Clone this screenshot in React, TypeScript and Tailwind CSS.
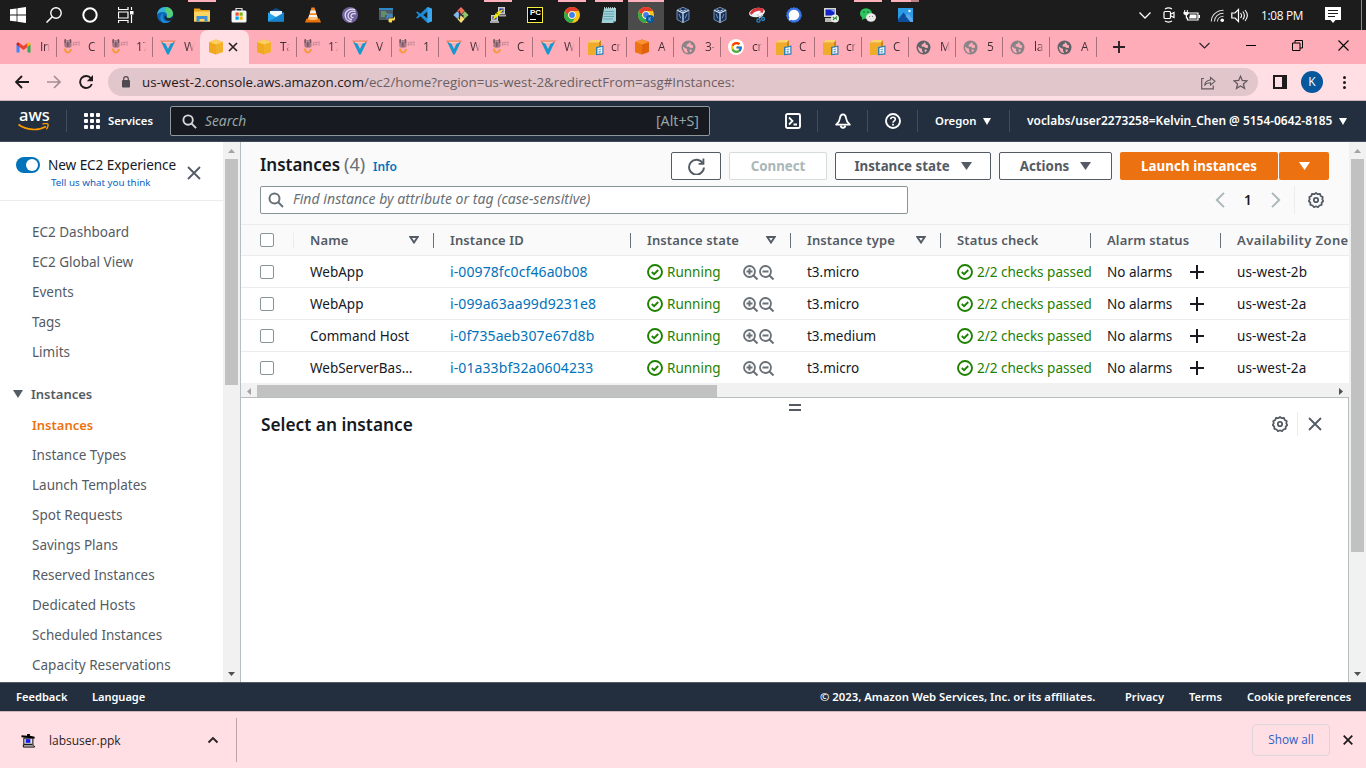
import React from "react";
import { FcGoogle } from "react-icons/fc";

type Kids = { children?: React.ReactNode };

const Svg = ({ s = 16, vb = "0 0 16 16", children, className = "" }: Kids & { s?: number; vb?: string; className?: string }) => (
  <svg width={s} height={s} viewBox={vb} fill="none" className={"shrink-0 " + className}>
    {children}
  </svg>
);

/* ---------- taskbar icons ---------- */

const WindowsIcon = () => (
  <Svg>
    <path fill="#fff" d="M0 2.300 6.600 1.400V7.600H0zM7.400 1.300 16 0v7.600H7.400zM0 8.400h6.600v6.200L0 13.700zM7.400 8.400H16V16l-8.600-1.200z" />
  </Svg>
);
const TaskSearch = () => (
  <Svg>
    <circle cx="10" cy="6" r="5.200" stroke="#fff" strokeWidth="1.400" />
    <path d="M6.300 9.700 .5 15.500" stroke="#fff" strokeWidth="1.500" />
  </Svg>
);
const Cortana = () => (
  <Svg>
    <circle cx="8" cy="8" r="6.700" stroke="#fff" strokeWidth="2" />
  </Svg>
);
const TaskView = () => (
  <Svg>
    <path d="M.5 0v2.500h9.500V0M.5 16v-2.500h9.500V16M.5 5h9.500v6H.5zM13.500 0v3M13.500 8v8" stroke="#fff" strokeWidth="1.200" />
    <rect x="12" y="4" width="3.500" height="3.500" fill="#fff" />
  </Svg>
);
const Edge = () => (
  <Svg>
    <circle cx="8" cy="8" r="8" fill="#0c62b4" />
    <path d="M.1 7.500C.6 3 4 0 8.200 0 13 0 16 3.400 16 6.800c0 2.700-2 4.200-4.200 4.200-1.900 0-2.800-.8-2.300-1.400C10.600 8 9.500 5 6 5 3 5 .8 6.400.1 7.500z" fill="#35b3d8" />
    <path d="M9 .1C13.500.5 16 3.700 16 6.800c0 2.700-2 4.200-4.200 4.200-1.900 0-2.800-.8-2.300-1.400 1.400-1.900.5-4.100-1-5z" fill="#5fd45c" opacity=".8" />
    <path d="M5.700 9.500c0 3 2.800 5.200 5.800 4.700 1.300-.2 2-.6 2.900-1.200C13 15 10.500 16 8 16c-3-.2-4.800-3-4.600-5.600C3.500 8 5 6.300 7 6.200 6.200 7 5.700 8 5.700 9.500z" fill="#1b8ad2" />
    <path d="M9.300 8.600c.8 1.700-.3 1.500.8 2.200 1.500.7 4 .3 5.300-1.600L14.500 13c-3 2-7 .3-7-2.500 0-1.200.8-2 1.800-1.900z" fill="#1c1c1c" opacity=".85" />
  </Svg>
);
const Folder = () => (
  <Svg>
    <path d="M0 1.500h5.500L7 3h9v11.500H0z" fill="#e9a31d" />
    <path d="M0 4.500h16v10H0z" fill="#fcd462" />
    <path d="M2.500 14.500V9h11v5.500h-3V12h-5v2.500z" fill="#3f8fd6" />
  </Svg>
);
const Store = () => (
  <Svg>
    <path d="M5 4V1.500h6V4" stroke="#dcdcdc" strokeWidth="1.200" />
    <rect x=".5" y="3.500" width="15" height="12" rx="1.500" fill="#f6f6f6" />
    <path d="M4.500 5.500h3.200v3.200H4.500z" fill="#f04f23" />
    <path d="M8.500 5.500h3.200v3.200H8.500z" fill="#7eb900" />
    <path d="M4.500 9.500h3.200v3.200H4.500z" fill="#00a2ee" />
    <path d="M8.500 9.500h3.200v3.200H8.500z" fill="#fdb900" />
  </Svg>
);
const Mail = () => (
  <Svg>
    <path d="M0 5.500 8 1l8 4.500V14H0z" fill="#0c4f92" />
    <path d="M2 4h12v7H2z" fill="#f2f7fb" />
    <path d="M0 5.500 8 10l8-4.500V14.500H0z" fill="#28a4ea" />
    <path d="M0 14.500 16 6v8.500z" fill="#1683cf" />
  </Svg>
);
const Vlc = () => (
  <Svg>
    <path d="M6.500.5h3L13 12H3z" fill="#f5871f" />
    <path d="M5.600 3.600h4.800l.8 2.600H4.800zM4.200 8.100h7.600l.8 2.500H3.400z" fill="#f4f1ee" />
    <path d="M1.500 11.500h13l1.500 4H0z" fill="#e8730c" />
    <path d="M3.500 10.500h9l.3 1.500c-2 1.300-7.600 1.300-9.600 0z" fill="#ffc07a" />
  </Svg>
);
const Swirl = () => (
  <Svg>
    <circle cx="8" cy="8" r="8" fill="#6f629c" />
    <path d="M13 2.500C8 1 3 4 3.200 8.500 3.400 12 6 14.500 9.500 14.500M13.500 4.500C9.500 3.500 6 5.500 6 8.500c0 2.500 2 4 4 4M14 7c-2.500-1-5 0-5 1.800 0 1.200 1 1.900 2.500 1.700" stroke="#e4dff2" strokeWidth="1.300" />
  </Svg>
);
const PyTerm = () => (
  <Svg>
    <rect x="0" y="1" width="14" height="12" fill="#4c5b66" />
    <rect x="0" y="1" width="14" height="2" fill="#2d88c8" />
    <path d="M2 5h5M2 7h7M2 9h4" stroke="#7ed06a" strokeWidth=".9" />
    <path d="M8 9c0-2 1-2.500 3-2.500s2.500 1 2.500 2v2H10c-1 0-1.500.8-1.500 2-1.500 0-1.500-3.500-.5-3.500z" fill="#3f86c0" />
    <path d="M15 9.500c1.500 0 1.200 4 0 4h-2v1.500c0 .8-3.500.8-3.500-.8v-1.400c0-1 .8-1.400 1.500-1.400h3c.7 0 1-.7 1-1.900z" fill="#ffd94a" />
  </Svg>
);
const VsCode = () => (
  <Svg>
    <path d="M11.500 0 16 1.800v12.400L11.500 16 4.300 9.300 1.500 11.500 0 10.700 2.600 8 0 5.300l1.500-.8 2.800 2.200zM11.500 4.500 7.200 8l4.300 3.500z" fill="#1c8cd8" fillRule="evenodd" />
    <path d="M11.500 0 16 1.800v12.400L11.500 16z" fill="#3aa6ee" />
  </Svg>
);
const GitBash = () => (
  <Svg>
    <path d="m8 0 3.700 3.700L8 7.400 4.300 3.700z" fill="#f0705a" />
    <path d="m4.300 4.300 3.500 3.700-3.500 3.700L.3 8z" fill="#86b7ee" />
    <path d="m11.700 4.300 3.900 3.700-3.900 3.700L8.200 8z" fill="#8fc86a" />
    <path d="M8 8.600 11.700 12 8 16l-3.700-4z" fill="#f5dc7a" />
    <path d="M6.500 3.500v9M6.500 6l3.500 3M10 8v2" stroke="#3a2f2f" strokeWidth="1.200" />
  </Svg>
);
const Putty = () => (
  <Svg>
    <path d="M8 0h7v7H8zM1 8h7v6H1z" fill="#c8c8c8" />
    <path d="M9.500 1.500h4v4h-4zM2.500 9.500h4v3h-4z" fill="#1e2ea8" />
    <path d="M9 7.500h7v2H9zM0 14h9v2H0z" fill="#a5a5a5" />
    <path d="m12.500 3-5 2.500L9.500 7 3.500 12l2.500-5 2 .5z" fill="#fff230" stroke="#f2e400" strokeWidth="1.200" />
  </Svg>
);
const PyCharm = () => (
  <span className="flex h-4 w-4 flex-col items-start border border-[#f4f03c] bg-black pl-0.5 font-['Liberation_Sans'] text-[8px] leading-[9px] font-bold text-white">
    PC
    <span className="mt-0.5 h-px w-1.5 bg-white" />
  </span>
);
const Chrome = ({ badge = false }: { badge?: boolean }) => (
  <Svg>
    <circle cx="8" cy="8" r="8" fill="#fbc116" />
    <path d="M1.100 4A8 8 0 0 1 14.900 4H8a4 4 0 0 0-3.500 6z" fill="#e33b2e" />
    <path d="M1.100 4A8 8 0 0 0 7.800 16l3.600-6a4 4 0 0 1-6.900 0z" fill="#2da94f" />
    <circle cx="8" cy="8" r="3.700" fill="#fff" />
    <circle cx="8" cy="8" r="2.900" fill="#3f7fe8" />
    {badge && <circle cx="12" cy="12" r="4" fill="#07579d" />}
    {badge && <path d="M11 10.300v3.400m2-3.400L11.200 12l1.900 1.700" stroke="#8fc1ee" strokeWidth=".8" />}
  </Svg>
);
const Notepad = () => (
  <Svg>
    <path d="M3 1.500 15 1v13l-3 2H.5z" fill="#9fd2d8" />
    <path d="M12 16V14l3 0z" fill="#5d8f97" />
    <path d="M3.500 4.500h9.500M3 7h10M2.700 9.500H13M2.300 12H12" stroke="#5b9aa4" strokeWidth=".8" />
    <path d="M3 1h12" stroke="#d5e6e8" strokeWidth="1.500" strokeDasharray="1 1" />
  </Svg>
);
const VBox = () => (
  <Svg>
    <path d="M8 .3 14 3v9.500L8 15.700 2 12.500V3z" fill="#14315c" stroke="#9fb6d4" strokeWidth=".7" />
    <path d="M2.300 3.200 8 6l5.700-2.800M8 6v9.500" stroke="#dce8f6" strokeWidth="1.200" />
    <path d="M5 2.800 8 4.300l3-1.500" stroke="#dce8f6" strokeWidth=".9" />
    <path d="m4 6.800 1.800 4.500M12 6.800l-1.800 4.500" stroke="#7f9bc2" strokeWidth=".9" />
  </Svg>
);
const Snip = () => (
  <Svg>
    <ellipse cx="8" cy="5.500" rx="8" ry="4.500" fill="#eceef0" transform="rotate(-12 8 5.500)" />
    <path d="M1 6c2-5 9-6.500 14-4l-1.500 4C10 4 5 5 2 8z" fill="#d8343c" />
    <path d="M4 6.500c2-2 5-3 8-2.500l-3 3z" fill="#fff" />
    <path d="m8 7 3 4m3-3-4 3" stroke="#c2d5e5" strokeWidth="1.200" />
    <circle cx="9.500" cy="13.500" r="1.600" stroke="#2b86c8" strokeWidth="1.300" />
    <circle cx="14" cy="12" r="1.500" stroke="#2b86c8" strokeWidth="1.300" />
  </Svg>
);
const Signal = () => (
  <Svg>
    <circle cx="8" cy="8" r="7.300" fill="#3a76ea" stroke="#3a76ea" strokeDasharray="2 1" />
    <path d="M8 2.700a5.300 5.300 0 1 1-2.500 10L2.700 13.500l.8-2.800A5.300 5.300 0 0 1 8 2.700z" fill="#fff" />
  </Svg>
);
const Rdp = () => (
  <Svg>
    <path d="M1 1h12v9H1z" fill="#d6d7cf" />
    <path d="M2.500 2.500h9v6h-9z" fill="#1324c8" />
    <path d="M7 2.500h4.500v3z" fill="#8f9cf0" />
    <path d="M2 11h8v4H2z" fill="#b9bab2" />
    <circle cx="12" cy="11.500" r="4" fill="#e9eee9" />
    <path d="m10 10 1.500 1.500L10 13m4-3.500L12.500 11l1.500 1.500" stroke="#2a8a30" strokeWidth="1.100" />
  </Svg>
);
const WeChat = () => (
  <Svg>
    <ellipse cx="6" cy="6.500" rx="6" ry="5.200" fill="#2dc55e" />
    <path d="m2.500 10-.7 3 3-1.500z" fill="#2dc55e" />
    <circle cx="4" cy="5" r=".8" fill="#155c2c" />
    <circle cx="8" cy="5" r=".8" fill="#155c2c" />
    <ellipse cx="11" cy="10.500" rx="5" ry="4.200" fill="#e9e9e9" />
    <circle cx="9.500" cy="9.500" r=".6" fill="#777" />
    <circle cx="12.500" cy="9.500" r=".6" fill="#777" />
  </Svg>
);
const Photos = () => (
  <Svg>
    <rect x="1" y="1" width="15" height="14" fill="#2b9be6" />
    <path d="M1 12.500 6.500 5.500 14 15H1z" fill="#0d4f9b" />
    <path d="m8.500 9 2.500-2.500 5 6V15h-2.500z" fill="#5aa9ea" />
    <circle cx="12.500" cy="4" r="1.200" fill="#fff" />
  </Svg>
);

const taskApps: { icon: React.ReactNode; open?: boolean; active?: boolean; stacked?: boolean }[] = [
  { icon: <Edge /> },
  { icon: <Folder />, open: true },
  { icon: <Store /> },
  { icon: <Mail /> },
  { icon: <Vlc /> },
  { icon: <Swirl /> },
  { icon: <PyTerm /> },
  { icon: <VsCode /> },
  { icon: <GitBash /> },
  { icon: <Putty />, open: true },
  { icon: <PyCharm /> },
  { icon: <Chrome />, open: true },
  { icon: <Notepad />, open: true },
  { icon: <Chrome badge />, active: true },
  { icon: <VBox /> },
  { icon: <VBox /> },
  { icon: <Snip /> },
  { icon: <Signal /> },
  { icon: <Rdp /> },
  { icon: <WeChat />, open: true },
  { icon: <Photos />, stacked: true },
];

function Taskbar() {
  return (
    <div className="flex h-[30px] shrink-0 bg-[#1c1c1c] text-white">
      {[<WindowsIcon />, <TaskSearch />, <Cortana />, <TaskView />].map((icon, i) => (
        <div key={i} className="flex w-9 items-center justify-center">{icon}</div>
      ))}
      <div className="ml-[3px] flex gap-px">
        {taskApps.map((a, i) => (
          <div key={i} className={"flex w-9 flex-col items-center " + (a.active ? "bg-[#4b4b4b]" : "")}>
            {a.stacked ? (
              <span className="flex h-0.5 w-7"><span className="w-5 bg-[#ffb0bb]" /><span className="w-2 bg-[#b98289]" /></span>
            ) : (
              <span className={"h-0.5 " + (a.active ? "w-9 bg-[#ffb0bb]" : a.open ? "w-7 bg-[#ffb0bb]" : "w-7")} />
            )}
            <span className="mt-[5px]">{a.icon}</span>
          </div>
        ))}
      </div>
      <div className="ml-auto flex items-center">
        <Svg s={12} vb="0 0 12 12"><path d="M.5 3.500 6 9l5.500-5.500" stroke="#fff" strokeWidth="1.300" /></Svg>
        <Svg s={16} className="ml-[10px]">
          <rect x="3" y="4.500" width="6.500" height="7" rx="1" stroke="#fff" strokeWidth="1.200" />
          <path d="m10 7 3-1.500v5L10 9M4 2c2-1.200 5-1.200 7 0M4 14c2 1.200 5 1.200 7 0" stroke="#fff" strokeWidth="1.200" />
        </Svg>
        <Svg s={17} vb="0 0 17 16" className="ml-[6px]">
          <path d="M5 5.500h10v7H4.500V10" stroke="#fff" strokeWidth="1.200" />
          <path d="M7 7h6.500v4H6zM15.500 7.500h1.500v3h-1.500zM.5 4.500h5v2L4 8v3H2.800V8L.5 6.500z" fill="#fff" />
          <path d="M1.700 2.500v3M4.300 2.500v3" stroke="#fff" />
        </Svg>
        <Svg s={14} className="ml-[10px]">
          <path d="M1.500 15.500C1.500 8 8 2.500 15.500 2.500M5 15.500C5 10 9.500 6 15.500 6M8.500 15.500c0-3.500 3-6 7-6" stroke="#d8d8d8" strokeWidth="1.200" />
          <circle cx="14" cy="14" r="2" fill="#fff" />
        </Svg>
        <Svg s={17} vb="0 0 17 16" className="ml-[7px]">
          <path d="M.8 5.500H4l3.500-3.500v12L4 10.500H.8z" stroke="#fff" strokeWidth="1.200" />
          <path d="M9.500 5.500c1.300 1.500 1.300 3.500 0 5M11.800 4c2 2.500 2 5.500 0 8M14 2.500c3 3.500 3 7.500 0 11" stroke="#fff" strokeWidth="1.100" />
        </Svg>
        <span className="ml-[13px] w-[42px] font-['Open_Sans'] text-[11.800px] leading-4 tracking-[-0.3px] whitespace-nowrap">1:08 PM</span>
        <Svg s={16} className="ml-[22px]">
          <path d="M0 0h16v13h-5.500L8 16l-2.500-3H0z" fill="#fff" />
          <path d="M3 3.500h10M3 6.500h10M3 9.500h7" stroke="#1c1c1c" strokeWidth="1.100" />
        </Svg>
        <span className="ml-[20px] h-[30px] w-px bg-[#8a8a8a]" />
        <span className="w-1" />
      </div>
    </div>
  );
}

/* ---------- browser tabs ---------- */

const Gmail = () => (
  <Svg s={15} vb="0 0 15 15">
    <path d="M.5 4v8.500h3V6.500z" fill="#4285f4" />
    <path d="M14.500 4v8.500h-3V6.500z" fill="#34a853" />
    <path d="M3.500 3v4l4 3 4-3V3l-4 3z" fill="#ea4335" />
    <path d="M.5 4c0-1.800 1.800-2 3-1v4l-3-2.500z" fill="#c5221f" />
    <path d="M14.500 4c0-1.800-1.800-2-3-1v4l3-2.500z" fill="#fbbc04" />
  </Svg>
);
const Vocareum = () => (
  <Svg s={16} vb="0 0 16 16">
    <path d="M0 1.500h16l-2.500 3H2.700z" fill="#f07f5c" />
    <path d="M2.500 2.800h11l-1.500 1.700H4z" fill="#fbc9c6" />
    <path d="M1.200 3 5.500 4.800 8 10l2.500-5.200L14.800 3 8.800 15.500H7.200z" fill="#1698cf" />
  </Svg>
);
const AwsFaint = () => (
  <Svg s={16} vb="0 0 16 16">
    <path d="M.3 1h7.200v6.500c-1 1.800-6 1.800-7.200 0z" fill="#a67884" />
    <path d="M1.200 0v4M6.400 0v4M3.800 3.500v4" stroke="#6f5360" strokeWidth="1.300" />
    <path d="M2.500 1.500v1.500M5 1.500v1.500" stroke="#d599a5" strokeWidth="1" />
    <path d="M8.500 3.500h7M8.500 5.500h5M9.500 3v4M12 2.500v4M15 2v5" stroke="#c58a97" strokeWidth="1.100" opacity=".8" />
    <path d="M1 9.500c-.3 5 5.800 5.200 6 .5" stroke="#f7983c" strokeWidth="2" />
  </Svg>
);
const Cube = ({ a = "#f3b02a", b = "#f0a81f", c = "#fbd05f" }: { a?: string; b?: string; c?: string }) => (
  <Svg s={16}>
    <path d="M8 .5 15 3v10l-7 2.500L1 13V3z" fill={a} />
    <path d="M1 3l7 2.500V15.500L1 13z" fill={b} />
    <path d="M8 .5 15 3 8 5.500 1 3z" fill={c} />
  </Svg>
);
const CubeDoc = () => (
  <Svg s={17} vb="0 0 17 16">
    <path d="m1 3 3-2.500h10L12 3z" fill="#fbd36b" />
    <path d="M1 3h11v12.500H1z" fill="#f0ab28" />
    <path d="m12 3 2-2.500v13L12 15.500z" fill="#c98512" />
    <path d="m9 7.500 7.500-1.500v9L9 15.800z" fill="#2e7eb5" />
    <path d="m10.500 8.500 4.800-.9v6.200l-4.800.8z" fill="#fff" />
    <path d="m11.500 10 2.800-.4M11.500 12l2.800-.4M11.500 13.500l2-.3" stroke="#2e7eb5" strokeWidth=".8" />
  </Svg>
);
const Globe = ({ dark = false }: { dark?: boolean }) => (
  <Svg s={15} vb="0 0 15 15">
    <circle cx="7.500" cy="7.500" r="7" fill={dark ? "#5f6368" : "#8a8387"} />
    <path d="M9 2.200c-1 .2-1.500.8-1.300 1.600L5.800 4.500 5.500 6.500l2.500.3 1.500 1.200 2.500-.2V5.500L10 4.500zM2 6.500l2.300 1.700 1.700.6v2l1.300 1.900H5C3 11.500 1.800 9 2 6.500zM8.500 9.500l2.500.3-.8 1.700-1.200.8z" fill="#ffacb9" />
  </Svg>
);
const GoogleTab = () => (
  <span className="flex h-4 w-4 shrink-0 items-center justify-center rounded-full bg-white"><FcGoogle size={13} /></span>
);

const LT = <Globe />;
const DK = <Globe dark />;
const left: [React.ReactNode, string][] = [[<Gmail />, "In"], [<AwsFaint />, "C"], [<AwsFaint />, "17"], [<Vocareum />, "W"]];
const right: [React.ReactNode, string][] = [
  [<Cube />, "Ta"], [<AwsFaint />, "17"], [<Vocareum />, "V"], [<AwsFaint />, "1"], [<Vocareum />, "W"], [<AwsFaint />, "C"],
  [<Vocareum />, "W"], [<CubeDoc />, "cr"], [<Cube a="#e0620a" b="#ee7412" c="#fb9332" />, "A"], [LT, "3-"], [<GoogleTab />, "cr"],
  [<CubeDoc />, "C"], [<CubeDoc />, "cr"], [<CubeDoc />, "C"], [DK, "M"], [LT, "5"], [LT, "la"], [DK, "A"],
];

const Tab = ({ icon, text, wide, line = true }: { icon: React.ReactNode; text: string; wide?: boolean; line?: boolean }) => (
  <div className={"flex h-full items-center overflow-hidden pl-[7px] " + (wide ? "w-12" : "w-[47px]")}>
    <span className="flex w-6 shrink-0">{icon}</span>
    <span className="w-[10px] overflow-hidden bg-linear-to-r from-[#3c2b30] from-50% to-[#ffacb9] bg-clip-text text-[12px] tracking-[-0.300px] whitespace-nowrap text-transparent">{text}</span>
    <span className={"ml-auto h-5 w-px shrink-0 " + (line ? "bg-[#a8707b]" : "")} />
  </div>
);

function TabStrip() {
  return (
    <div className="flex h-[34px] shrink-0 items-center bg-[#ffacb9] pl-[9px] font-['Open_Sans']">
      {left.map(([icon, t], i) => <Tab key={i} icon={icon} text={t} wide={i < 3} line={i < 3} />)}
      <div className="flex h-full w-[49px] items-center rounded-t-lg bg-[#ffdee4] pl-2">
        <Cube />
        <Svg s={10} vb="0 0 10 10" className="ml-1"><path d="m1 1 8 8M9 1 1 9" stroke="#2b2226" strokeWidth="1.700" /></Svg>
      </div>
      {right.map(([icon, t], i) => <Tab key={i} icon={icon} text={t} wide={i < 2} />)}
      <Svg s={12} vb="0 0 12 12" className="ml-4"><path d="M6 0v12M0 6h12" stroke="#2b2226" strokeWidth="1.900" /></Svg>
      <div className="ml-auto flex items-center pb-1">
        <Svg s={11} vb="0 0 11 11"><path d="m.5 3 5 5 5-5" stroke="#2b2226" strokeWidth="1.100" /></Svg>
        <span className="ml-9 h-px w-2.5 bg-black" />
        <Svg s={11} vb="0 0 11 11" className="ml-9"><path d="M.5 3h7.500v7.500H.5zM3 3V.5h7.500V8H8" stroke="#000" /></Svg>
        <Svg s={11} vb="0 0 11 11" className="mr-[17px] ml-[35px]"><path d="m.5.5 10 10m0-10-10 10" stroke="#000" strokeWidth="1.100" /></Svg>
      </div>
    </div>
  );
}

function AddressBar() {
  return (
    <div className="flex h-[37px] shrink-0 items-start border-b border-[#cdb5ba] bg-[#ffdee4] pt-1">
      <div className="flex h-7 w-[108px] items-center pl-[15px]">
        <Svg s={14} vb="0 0 14 14"><path d="M14 7H1m6-6L1 7l6 6" stroke="#1f1a1c" strokeWidth="1.900" /></Svg>
        <Svg s={14} vb="0 0 14 14" className="ml-[18px]"><path d="M0 7h13M7 1l6 6-6 6" stroke="#a38f94" strokeWidth="1.700" /></Svg>
        <Svg s={14} vb="0 0 14 14" className="ml-[18px]">
          <path d="M12 3.500A6 6 0 1 0 12.800 9" stroke="#1f1a1c" strokeWidth="1.900" />
          <path d="M14 0v6.200H7.800z" fill="#1f1a1c" />
        </Svg>
      </div>
      <div className="flex h-7 w-[1150px] items-center rounded-full bg-[#e1c6cb] pr-[10px] pl-[14px]">
        <svg width="8" height="12" viewBox="0 0 8 12" fill="none" className="shrink-0">
          <rect x="0" y="4" width="8" height="7.500" rx="1" fill="#4f4a50" />
          <path d="M1.700 5V3a2.300 2.300 0 0 1 4.600 0v2" stroke="#4f4a50" strokeWidth="1.200" />
        </svg>
        <span className="ml-3 pt-0.5 font-['Open_Sans'] text-[13.300px] tracking-[0.020px] whitespace-nowrap text-[#6b5f63]">
          <span className="text-[#1f1a1c]">us-west-2.console.aws.amazon.com</span>/ec2/home?region=us-west-2&amp;redirectFrom=asg#Instances:
        </span>
        <Svg s={15} vb="0 0 15 14" className="ml-auto">
          <path d="M3 3H.7v10.300h11.600V10" stroke="#655b5f" strokeWidth="1.200" />
          <path d="M3.500 10C4 6.500 6 4.700 9.500 4.500V2L14 5.800 9.500 9.500V7.300C7 7.300 5 8 3.500 10z" stroke="#655b5f" strokeWidth="1.100" />
        </Svg>
        <Svg s={15} vb="0 0 15 15" className="ml-[17px]">
          <path d="m7.500 1.300 1.800 4.200 4.600.4-3.500 3 1.100 4.500-4-2.400-4 2.400 1.100-4.500-3.500-3 4.600-.4z" stroke="#655b5f" strokeWidth="1.300" />
        </Svg>
      </div>
      <div className="flex h-7 items-center pl-[15px]">
        <Svg s={14} vb="0 0 14 14"><path d="M1 1h12v12H1z" stroke="#1f1a1c" strokeWidth="2" /><path d="M9 1h4v12H9z" fill="#1f1a1c" /></Svg>
        <span className="ml-[14px] flex h-[22px] w-[22px] items-center justify-center rounded-full bg-[#07579d] font-['Open_Sans'] text-[12px] text-white">K</span>
        <span className="ml-5 flex flex-col gap-0.5">
          {[0, 1, 2].map((i) => <span key={i} className="h-[3px] w-[3px] rounded-full bg-[#1f1a1c]" />)}
        </span>
      </div>
    </div>
  );
}

/* ---------- console ---------- */

const Tri = ({ w = 10, h = 8, color = "#545b64" }: { w?: number; h?: number; color?: string }) => (
  <svg width={w} height={h} viewBox="0 0 10 8" preserveAspectRatio="none" className="shrink-0"><path d="M0 0h10L5 8z" fill={color} /></svg>
);

const Magnifier = ({ color, s = 16 }: { color: string; s?: number }) => (
  <Svg s={s}><circle cx="6.500" cy="6.500" r="5" stroke={color} strokeWidth="2" /><path d="m10 10 5 5" stroke={color} strokeWidth="2" /></Svg>
);

const Divider = () => <span className="mr-[17px] ml-4 block h-[22px] w-px bg-[#414d5c]" />;

function ConsoleHeader() {
  return (
    <div className="flex h-[41px] shrink-0 items-center border-b border-[#414d5c] bg-[#232f3e] text-[11.300px] font-semibold text-white">
      <div className="ml-[18px] flex w-[31px] flex-col">
        <span className="-mt-1 h-[15px] pl-px text-[16.500px] leading-[14px] font-medium">aws</span>
        <svg width="31" height="8" viewBox="0 0 31 8" fill="none"><path d="M.5 1.500c8 6 20 6.500 27.500 2" stroke="#f90" strokeWidth="1.700" /><path d="M24.500 1.200c2-.8 4.500-1 5.300-.2s0 3.500-1.500 5.300" stroke="#f90" strokeWidth="1.300" /></svg>
      </div>
      <span className="mx-[17px] block h-[22px] w-px bg-[#414d5c]" />
      <span className="grid grid-cols-3 gap-[2px]">
        {Array.from({ length: 9 }, (_, i) => <span key={i} className="h-1 w-1 rounded-[1px] bg-white" />)}
      </span>
      <span className="ml-2 w-[62px]">Services</span>
      <div className="flex h-[30px] w-[540px] items-center rounded-[2px] border border-[#8d9999] bg-[#171a21] pr-[10px] pl-[11px] font-normal text-[#95a5a6]">
        <Magnifier color="#d5dbdb" s={15} />
        <span className="ml-2 text-[13.800px] italic">Search</span>
        <span className="ml-auto text-[14.200px]">[Alt+S]</span>
      </div>
      <Svg className="ml-[75px]"><rect x="1" y="1" width="14" height="14" rx="1.500" stroke="#fff" strokeWidth="1.900" /><path d="m4 4.500 3.500 3.500L4 11.500M8.500 11.500H12" stroke="#fff" strokeWidth="1.800" /></Svg>
      <Divider />
      <Svg><path d="M8 1.300C6 1.300 5.200 3 5 5 4.800 8 3.500 9.500 1.200 11.700h13.600C12.500 9.500 11.200 8 11 5c-.2-2-1-3.700-3-3.700z" stroke="#fff" strokeWidth="1.800" strokeLinejoin="round" /><path d="M5.800 12.500a2.200 2.200 0 0 0 4.400 0" stroke="#fff" strokeWidth="1.900" /></Svg>
      <Divider />
      <Svg><circle cx="8" cy="8" r="7" stroke="#fff" strokeWidth="1.900" /><path d="M5.700 6.200C5.700 4.800 6.800 4.200 8 4.200s2.300.8 2.300 2C10.300 7.800 8 7.800 8 9.700" stroke="#fff" strokeWidth="1.600" /><rect x="7.100" y="10.800" width="1.800" height="1.700" fill="#fff" /></Svg>
      <Divider />
      <span className="w-[48px]">Oregon</span>
      <Tri w={8} h={7} color="#fff" />
      <span className="mr-[17px] ml-[18px] block h-[22px] w-px bg-[#414d5c]" />
      <span className="w-[312px] text-[11.900px] tracking-[0.020px] whitespace-nowrap">voclabs/user2273258=Kelvin_Chen @ 5154-0642-8185</span>
      <Tri w={8} h={7} color="#fff" />
    </div>
  );
}

const Cross = ({ s = 14, color = "#545b64", sw = 2 }: { s?: number; color?: string; sw?: number }) => (
  <Svg s={s} vb="0 0 14 14"><path d="m1 1 12 12M13 1 1 13" stroke={color} strokeWidth={sw} /></Svg>
);

const VScroll = ({ thumb }: { thumb: string }) => (
  <div className="flex w-[17px] shrink-0 flex-col items-center bg-[#f1f1f1]">
    <span className="flex h-[17px] items-center"><svg width="7" height="4" viewBox="0 0 7 4"><path d="M0 4h7L3.500 0z" fill="#a3a3a3" /></svg></span>
    <span className={"w-[13px] bg-[#c1c1c1] " + thumb} />
    <span className="mt-auto flex h-[17px] items-center"><svg width="7" height="4" viewBox="0 0 7 4"><path d="M0 0h7L3.500 4z" fill="#505050" /></svg></span>
  </div>
);

const topNav = ["EC2 Dashboard", "EC2 Global View", "Events", "Tags", "Limits"];
const instNav = ["Instances", "Instance Types", "Launch Templates", "Spot Requests", "Savings Plans", "Reserved Instances", "Dedicated Hosts", "Scheduled Instances", "Capacity Reservations"];

function Sidebar() {
  return (
    <>
      <nav className="flex w-[223px] shrink-0 flex-col overflow-hidden bg-white text-[13.500px] text-[#545b64]">
        <div className="flex h-[59px] shrink-0 items-start border-b border-[#eaeded] pl-4">
          <span className="mt-[15px] flex h-4 w-6 justify-end rounded-full bg-[#0073bb] p-0.5"><span className="h-3 w-3 rounded-full bg-white" /></span>
          <div className="ml-2 flex w-[139px] flex-col whitespace-nowrap">
            <span className="mt-[13px] text-[13.600px] leading-5 tracking-[-0.080px] text-[#16191f]">New EC2 Experience</span>
            <span className="ml-[3px] text-[9.800px] leading-[15px] text-[#0a5fc0]">Tell us what you think</span>
          </div>
          <span className="mt-6"><Cross s={14} sw={1.800} /></span>
        </div>
        <ul className="mt-4 pl-8">
          {topNav.map((t) => <li key={t} className="h-[30px] leading-[30px]">{t}</li>)}
        </ul>
        <div className="mt-3 flex h-[30px] items-center pl-[13px] font-semibold">
          <Tri w={10} h={8} />
          <span className="ml-2 pb-px text-[13px] leading-5">Instances</span>
        </div>
        <ul className="mt-px pl-8">
          {instNav.map((t, i) => <li key={t} className={"h-[30px] leading-[30px] whitespace-nowrap " + (i === 0 ? "text-[13px] font-semibold text-[#ec7211]" : "")}>{t}</li>)}
        </ul>
      </nav>
      <VScroll thumb="h-[226px]" />
    </>
  );
}

const Check = () => (
  <Svg><circle cx="8" cy="8" r="7" stroke="#1d8102" strokeWidth="1.900" /><path d="m4.800 8 2.300 2.200 4.100-4.200" stroke="#1d8102" strokeWidth="1.900" /></Svg>
);
const Zoom = ({ plus = false }: { plus?: boolean }) => (
  <Svg s={15} vb="0 0 15 15">
    <circle cx="6.500" cy="6.500" r="5.500" stroke="#687078" strokeWidth="1.800" />
    <path d={plus ? "M3.500 6.500h6M6.500 3.500v6M10.500 10.500l4 4" : "M3.500 6.500h6M10.500 10.500l4 4"} stroke="#687078" strokeWidth="2" />
  </Svg>
);
const Gear = () => (
  <Svg>
    <path d="m8 1 1.800 1.200 2.200-.3.700 2.100 2 1-.4 2.200.9 1.900-1.500 1.600-.1 2.200-2.200.6L10 15.200l-2-.9-2 .9-1.400-1.700-2.200-.6-.1-2.200L.8 9.100l.9-1.900L1.300 5l2-1L4 1.900l2.200.3z" stroke="#545b64" strokeWidth="1.800" strokeLinejoin="round" />
    <circle cx="8" cy="8" r="2.200" stroke="#545b64" strokeWidth="1.800" />
  </Svg>
);
const Box = () => <span className="block h-[14px] w-[14px] rounded-[2px] border border-[#879596] bg-white" />;

const cols = "grid grid-cols-[53px_140px_197px_160px_150px_150px_130px_128px]";
const headers: [string, boolean][] = [["Name", true], ["Instance ID", false], ["Instance state", true], ["Instance type", true], ["Status check", false], ["Alarm status", false]];
const rows = [
  ["WebApp", "i-00978fc0cf46a0b08", "t3.micro", "us-west-2b"],
  ["WebApp", "i-099a63aa99d9231e8", "t3.micro", "us-west-2a"],
  ["Command Host", "i-0f735aeb307e67d8b", "t3.medium", "us-west-2a"],
  ["WebServerBas…", "i-01a33bf32a0604233", "t3.micro", "us-west-2a"],
];

const Btn = ({ children, className = "" }: Kids & { className?: string }) => (
  <button className={"flex h-7 items-center justify-center rounded-[2px] text-[13.300px] leading-5 font-bold " + className}>{children}</button>
);

function Main() {
  return (
    <main className="flex min-w-0 flex-1 flex-col border-l border-[#b4bfc1] bg-white text-[13.500px] text-[#16191f]">
      <div className="flex h-[82px] shrink-0 flex-col bg-[#fafafa] pl-[19px]">
        <div className="flex h-11 items-start pt-[10px]">
          <h1 className="-mt-px flex items-baseline leading-[26px]">
            <span className="w-[84px] text-[17px] font-semibold">Instances</span>
            <span className="w-[29px] text-[18px] text-[#687078]">(4)</span>
            <span className="text-[12px] font-semibold text-[#0073bb]">Info</span>
          </h1>
          <div className="mr-[20px] ml-auto flex">
            <Btn className="w-[50px] border border-[#545b64] bg-white">
              <Svg s={17} vb="0 0 16 16"><path d="M14 5A7 7 0 1 0 15 9" stroke="#545b64" strokeWidth="1.800" /><path d="M14.500 .5v5H10" stroke="#545b64" strokeWidth="1.800" /></Svg>
            </Btn>
            <Btn className="ml-2 w-[98px] border border-[#d5dbdb] bg-white text-[#aab7b8]">Connect</Btn>
            <Btn className="ml-2 w-[156px] gap-[11px] border border-[#545b64] bg-white text-[#545b64]">Instance state<Tri w={11} /></Btn>
            <Btn className="ml-2 w-[113px] gap-[11px] border border-[#545b64] bg-white text-[#545b64]">Actions<Tri w={11} /></Btn>
            <Btn className="ml-2 w-[158px] bg-[#ec7211] tracking-[0.070px] text-white">Launch instances</Btn>
            <Btn className="ml-px w-[50px] bg-[#ec7211]"><Tri w={11} color="#fff" /></Btn>
          </div>
        </div>
        <div className="flex h-7 items-center">
          <div className="flex h-7 w-[648px] items-center rounded-[2px] border border-[#879596] bg-white pl-[7px]">
            <Magnifier color="#687078" />
            <span className="ml-[9px] pb-0.5 text-[14px] leading-5 tracking-[0.040px] text-[#687078] italic">Find instance by attribute or tag (case-sensitive)</span>
          </div>
          <div className="mr-[25px] ml-auto flex items-center">
            <Svg s={16}><path d="M12 .8 4.800 8l7.200 7.200" stroke="#aab7b8" strokeWidth="1.900" /></Svg>
            <span className="mx-4 w-2 font-semibold">1</span>
            <Svg s={16}><path d="m4 .8 7.200 7.200-7.200 7.200" stroke="#aab7b8" strokeWidth="1.900" /></Svg>
            <span className="mr-[13px] ml-[10px] h-7 w-px bg-[#eaeded]" />
            <Gear />
          </div>
        </div>
      </div>

      <div className={cols + " h-8 shrink-0 items-center border-y border-[#eaeded] bg-[#fafafa] text-[13px] leading-5 font-semibold tracking-[0.120px] text-[#545b64]"}>
        <div className="flex h-[15px] items-center border-r border-[#eaeded] pl-[19px]"><Box /></div>
        {headers.map(([h, f]) => (
          <div key={h} className="flex h-[15px] items-center justify-between border-r border-[#687078] pr-[14px] pl-4 whitespace-nowrap">
            <span className="pb-px">{h}</span>
            {f && <svg width="10" height="8" viewBox="0 0 10 8" fill="none"><path d="M1.300 1h7.400L5 6.500z" stroke="#545b64" strokeWidth="1.900" /></svg>}
          </div>
        ))}
        <div className="overflow-hidden pb-px pl-4 tracking-[0.400px] whitespace-nowrap">Availability Zone</div>
      </div>

      <div className="h-[127px] shrink-0 overflow-hidden">
        {rows.map(([name, id, type, az]) => (
          <div key={id} className={cols + " h-8 items-center border-b border-[#eaeded] pt-px leading-5 whitespace-nowrap"}>
            <div className="pl-[19px]"><Box /></div>
            <div className="pl-4">{name}</div>
            <div className="pl-4 text-[14px] tracking-[0.100px] text-[#0073bb]">{id}</div>
            <div className="flex items-center pl-4 text-[#1d8102]">
              <Check /><span className="ml-1 w-[76px]">Running</span><Zoom plus /><span className="w-px" /><Zoom />
            </div>
            <div className="pl-4">{type}</div>
            <div className="flex items-center gap-1 overflow-hidden pl-4 text-[#1d8102]"><Check />2/2 checks passed</div>
            <div className="flex items-center pl-4">
              <span className="w-[83px]">No alarms</span>
              <Svg s={14} vb="0 0 14 14"><path d="M7 0v14M0 7h14" stroke="#16191f" strokeWidth="2" /></Svg>
            </div>
            <div className="pl-4 tracking-[0.100px]">{az}</div>
          </div>
        ))}
      </div>

      <div className="flex h-[14px] shrink-0 items-end bg-[#f1f1f1]">
        <span className="flex h-[12px] w-4 items-center justify-center"><svg width="4" height="7" viewBox="0 0 4 7"><path d="M4 0v7L0 3.500z" fill="#a3a3a3" /></svg></span>
        <span className="h-[12px] w-[460px] bg-[#c1c1c1]" />
        <span className="mr-1.5 ml-auto flex h-[12px] items-center"><svg width="4" height="7" viewBox="0 0 4 7"><path d="M0 0v7l4-3.500z" fill="#505050" /></svg></span>
      </div>

      <section className="flex flex-1 flex-col border-t border-r border-[#b8bebe] bg-white">
        <div className="mx-auto mt-1.5 flex h-[7px] w-3 flex-col justify-between border-y-2 border-[#545b64]" />
        <div className="mt-px flex h-6 items-center pr-[26px] pl-5">
          <h2 className="pt-0.5 text-[17.300px] leading-6 font-semibold">Select an instance</h2>
          <span className="ml-auto" />
          <Gear />
          <span className="mr-[10px] ml-[9px] h-6 w-px bg-[#eaeded]" />
          <Cross s={14} sw={1.800} />
        </div>
      </section>
    </main>
  );
}

export default function App() {
  return (
    <div className="flex h-[768px] w-[1366px] flex-col overflow-hidden font-['Noto_Sans',sans-serif]">
      <Taskbar />
      <TabStrip />
      <AddressBar />
      <ConsoleHeader />
      <div className="flex h-[540px] shrink-0">
        <Sidebar />
        <Main />
        <VScroll thumb="h-[393px]" />
      </div>
      <footer className="flex h-[29px] shrink-0 items-center border-t border-[#545b64] bg-[#232f3e] pr-4 pl-4 text-[11.100px] leading-4 font-semibold whitespace-nowrap text-white">
        <span className="w-[76px]">Feedback</span>
        <span className="tracking-[-0.050px]">Language</span>
        <span className="ml-auto w-[305px] text-[11.300px]">© 2023, Amazon Web Services, Inc. or its affiliates.</span>
        <span className="w-[64px]">Privacy</span>
        <span className="w-[58px]">Terms</span>
        <span className="w-[103px]">Cookie preferences</span>
      </footer>
      <div className="flex flex-1 items-center border-t border-[#cdb5ba] bg-[#ffdee4] font-['Open_Sans'] text-[12px]">
        <Svg s={15} vb="0 0 15 16" className="ml-[21px]">
          <path d="M0 2.500 6 3V1h3v2l5 1v2L0 4.500z" fill="#000" />
          <path d="M2.500 5.500h9.500v6.500H2.500z" fill="#e4e4e4" stroke="#000" />
          <path d="M4.500 6.500h5v4h-5z" fill="#1a1af0" />
          <path d="M2 12.500h10.500l1.500 2.500H2z" fill="#c9c9c9" stroke="#000" />
          <path d="M12.300 6v8" stroke="#777" strokeWidth="1.200" />
        </Svg>
        <span className="ml-[13px] w-[158px] pt-px text-[#2b2226]">labsuser.ppk</span>
        <Svg s={12} vb="0 0 12 12"><path d="m1.500 8.500 4.500-4.500 4.500 4.500" stroke="#2b2226" strokeWidth="1.900" /></Svg>
        <span className="ml-[17px] h-[44px] w-px bg-[#bfa5aa]" />
        <span className="ml-auto flex h-8 w-[78px] items-center justify-center rounded border border-[#dcd5dc] pb-0.5 text-[11.800px] leading-4 text-[#2c5fc4]">Show all</span>
        <span className="mr-[13px] ml-[13px]"><Cross s={10} color="#1f1a1c" sw={2.500} /></span>
      </div>
    </div>
  );
}
